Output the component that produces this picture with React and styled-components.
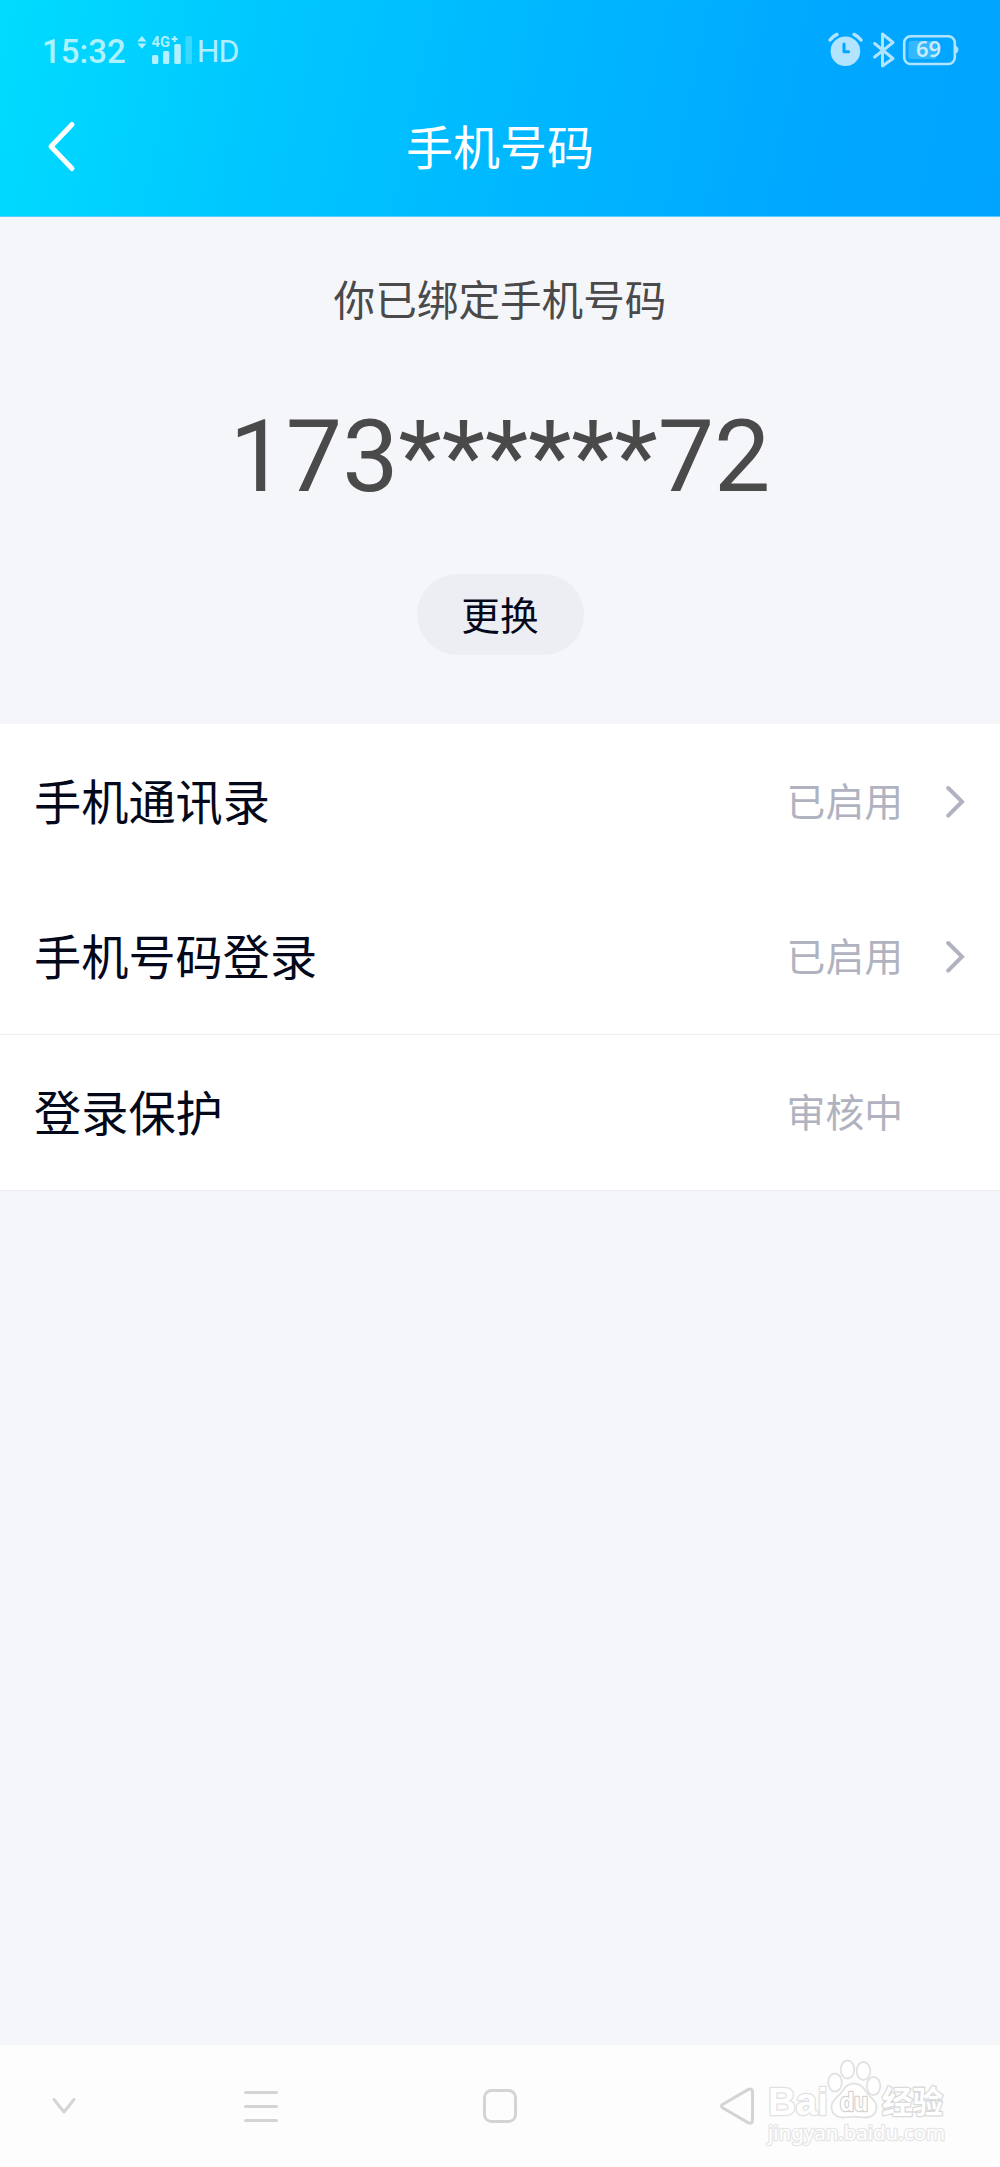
import React from 'react';
import styled, { createGlobalStyle } from 'styled-components';

const GlobalStyle = createGlobalStyle`
  * {
    box-sizing: border-box;
  }
  body {
    margin: 0;
    background: #f4f6fa;
    font-family: Roboto, 'Noto Sans CJK SC', sans-serif;
  }
`;

const Screen = styled.div`
  display: flex;
  flex-direction: column;
  width: 1000px;
  height: 2167px;
  background: #f4f6fa;
`;

const Header = styled.header`
  height: 217px;
  flex: none;
  border-bottom: 1px solid #5ccbff;
  background: linear-gradient(102deg, #00dcff 0%, #00c6ff 28%, #00b5ff 57%, #00a7ff 82%, #00a4ff 100%);
`;

const StatusBar = styled.div`
  display: flex;
  justify-content: space-between;
  height: 78px;
  padding: 0 40px 0 42px;
`;

const StatusGroup = styled.div`
  display: flex;
  align-items: flex-start;
`;

const StatusText = styled.span`
  margin: ${props => props.$margin || '0'};
  color: rgba(255, 255, 255, 0.7);
  font-size: ${props => props.$size}px;
  font-weight: ${props => props.$weight || 400};
  line-height: 40px;
  letter-spacing: ${props => props.$spacing || 0}px;
  white-space: nowrap;
`;

const StatusIcon = styled.svg`
  flex: none;
  display: block;
`;

const TitleBar = styled.div`
  display: grid;
  grid-template-columns: 120px 1fr 120px;
  align-items: center;
  height: 138px;
`;

const BackButton = styled.button`
  width: 120px;
  height: 138px;
  padding: 0;
  border: 0;
  background: none;
`;

const Title = styled.h1`
  margin: 4px 0 0;
  color: #fff;
  font-size: 47px;
  font-weight: 400;
  line-height: 60px;
  text-align: center;
`;

const Summary = styled.section`
  display: flex;
  flex-direction: column;
  align-items: center;
  height: 507px;
  flex: none;
  padding-top: 55px;
`;

const Caption = styled.div`
  color: #4a4a4a;
  font-size: 41.6px;
  line-height: 60px;
`;

const PhoneNumber = styled.div`
  margin-top: 65px;
  color: #4a4a4a;
  font-size: 100.3px;
  line-height: 120px;
`;

const ChangeButton = styled.button`
  width: 167px;
  height: 81px;
  margin-top: 57px;
  padding: 0 0 3px;
  border: 0;
  border-radius: 41px;
  background: #edeef3;
  color: #03081a;
  font-family: inherit;
  font-size: 38.7px;
`;

const List = styled.div`
  flex: none;
  background: #fff;
  border-bottom: 1px solid #ebeef5;
`;

const Row = styled.div`
  display: flex;
  align-items: center;
  height: ${props => (props.$divided ? 156 : 155)}px;
  padding: 0 34px;
  border-top: ${props => (props.$divided ? '1px solid #ebeff5' : '0')};
`;

const Label = styled.span`
  flex: 1;
  padding-top: 5px;
  color: #03081a;
  font-size: 47.2px;
  line-height: 70px;
`;

const Value = styled.span`
  padding-top: 3px;
  color: #b0b3bf;
  font-size: 38.8px;
  line-height: 60px;
`;

const ArrowSlot = styled.span`
  display: flex;
  justify-content: flex-end;
  width: 63px;
`;

const NavBar = styled.nav`
  display: flex;
  align-items: flex-start;
  height: 122px;
  flex: none;
  margin-top: auto;
  background: #fdfdfd;
`;

const NavIcon = styled.svg`
  flex: none;
  width: ${props => props.$width}px;
  height: 122px;
  fill: none;
  stroke: #d4d4d4;
  stroke-width: 3;
  stroke-linecap: round;
  stroke-linejoin: round;
`;

const Watermark = styled.svg`
  flex: none;
  width: 200px;
  height: 122px;
  fill: #fff;
  stroke: #e2e2e2;

  text {
    paint-order: stroke;
    stroke-width: 2.6px;
    stroke-linejoin: round;
  }
`;

const rows = [
  { label: '手机通讯录', value: '已启用', arrow: true },
  { label: '手机号码登录', value: '已启用', arrow: true },
  { label: '登录保护', value: '审核中', divided: true },
];

const Signal = () => (
  <StatusIcon width="66" height="78" viewBox="131 0 66 78" fill="#fff" fillOpacity="0.7">
    <path d="M137.3 41.5 141.9 36l4.6 5.5zM137.3 43.5h9.2l-4.6 5.3z" />
    <text x="151.5" y="47" fontSize="15" fontWeight="700" textLength="18.5" lengthAdjust="spacingAndGlyphs">4G</text>
    <path d="M174.6 36v6M171.6 39h6" stroke="#fff" strokeOpacity="0.7" strokeWidth="2" />
    <rect x="152" y="55" width="6.3" height="9" rx="1.6" />
    <rect x="163" y="51" width="6.3" height="13" rx="1.6" />
    <rect x="174.3" y="44" width="6.5" height="20" rx="1.6" />
    <rect x="185.3" y="36" width="6.7" height="28" rx="1.6" fillOpacity="0.22" />
  </StatusIcon>
);

const StatusIcons = () => (
  <StatusIcon width="140" height="78" viewBox="820 0 140 78" fill="none" stroke="#b3e4ff">
    <circle cx="845.4" cy="51.3" r="14.8" fill="#b3e4ff" stroke="none" />
    <path d="M844 44v7.8h4.6" stroke="#00a6ff" strokeWidth="3" strokeLinecap="round" strokeLinejoin="round" />
    <path d="M830 40q2.5-3.5 7-5.6M861 40q-2.5-3.5-7-5.6" strokeWidth="3.4" strokeLinecap="round" />
    <path d="M874.6 43.5 893 58.5l-10.5 7.5V34L893 42.5 874.6 57" strokeWidth="3" strokeLinecap="round" strokeLinejoin="round" />
    <rect x="904.2" y="36.2" width="50.6" height="27.8" rx="6.5" strokeWidth="2.6" />
    <path d="M956 46.5q2 .5 2 3.2t-2 3.3z" fill="#b3e4ff" strokeWidth="1" />
    <rect x="908.5" y="41" width="28" height="18" rx="2.5" fill="#fff" fillOpacity="0.2" stroke="none" />
    <text x="928.5" y="57.3" fill="#c8ecff" stroke="none" fontFamily="Noto Sans" fontSize="22" fontWeight="600" textAnchor="middle">69</text>
  </StatusIcon>
);

const Chevron = () => (
  <svg width="20" height="34" viewBox="0 0 20 34" fill="none" stroke="#b0b3bf" strokeWidth="4" strokeLinecap="round">
    <path d="M2.2 3 16 16.7 2.2 30.6" />
  </svg>
);

const App = () => (
  <>
    <GlobalStyle />
    <Screen>
      <Header>
        <StatusBar>
          <StatusGroup>
            <StatusText $size={33} $weight={500} $margin="32px 5px 0 0">15:32</StatusText>
            <Signal />
            <StatusText $size={32} $margin="31px 0 0 0" $spacing={-1}>HD</StatusText>
          </StatusGroup>
          <StatusGroup>
            <StatusIcons />
          </StatusGroup>
        </StatusBar>
        <TitleBar>
          <BackButton aria-label="返回">
            <svg width="120" height="138" fill="none" stroke="#fff" strokeWidth="5" strokeLinecap="round" strokeLinejoin="round">
              <path d="M72 46.5 51 68.5 72 90.5" />
            </svg>
          </BackButton>
          <Title>手机号码</Title>
        </TitleBar>
      </Header>
      <Summary>
        <Caption>你已绑定手机号码</Caption>
        <PhoneNumber>173******72</PhoneNumber>
        <ChangeButton>更换</ChangeButton>
      </Summary>
      <List>
        {rows.map(item => (
          <Row key={item.label} $divided={item.divided}>
            <Label>{item.label}</Label>
            <Value>{item.value}</Value>
            <ArrowSlot>{item.arrow && <Chevron />}</ArrowSlot>
          </Row>
        ))}
      </List>
      <NavBar>
        <NavIcon $width={200} viewBox="0 0 200 122">
          <path d="M54 54.5 64 67 74 54.5" />
        </NavIcon>
        <NavIcon $width={200} viewBox="200 0 200 122">
          <path d="M245.5 47.5h31M245.5 61.5h31M245.5 75.5h31" />
        </NavIcon>
        <NavIcon $width={200} viewBox="400 0 200 122">
          <rect x="484.5" y="45.5" width="31" height="31" rx="7" />
        </NavIcon>
        <NavIcon $width={160} viewBox="600 0 160 122">
          <path d="M722.5 59.5 748 44.6q4.5-2 4.5 2.5v28q0 4.5-4.5 2.5L722.5 62.7q-2-1.6 0-3.2z" />
        </NavIcon>
        <Watermark viewBox="760 2045 200 122">
          <text x="768" y="2115" fontFamily="Liberation Sans" fontWeight="700" fontSize="38" textLength="60" lengthAdjust="spacingAndGlyphs">Bai</text>
          <g strokeWidth="1.8">
            <ellipse cx="835" cy="2082.5" rx="6.8" ry="9" />
            <ellipse cx="847.5" cy="2069.5" rx="6.8" ry="9" />
            <ellipse cx="863.5" cy="2071" rx="6.8" ry="9" />
            <ellipse cx="873.5" cy="2086" rx="6.8" ry="9" />
            <path d="M854 2083.5c7 0 10 5 13 9.5s9.500 7 9.500 14-5 10.500-11 10.500c-5 0-7-.8-11.500-.8s-6.500.8-11.500.8c-6 0-11-4-11-10.500 0-7 6-9.500 9.500-14s6-9.500 13-9.500z" />
          </g>
          <text x="840" y="2111" fontFamily="Liberation Sans" fontWeight="700" fontSize="25" textLength="28" lengthAdjust="spacingAndGlyphs" stroke="#d2d2d2">du</text>
          <text x="882" y="2113" fontFamily="Noto Sans CJK SC" fontWeight="700" fontSize="30.5" textLength="61" stroke="#dadada">经验</text>
          <text x="768" y="2139.5" fontFamily="Noto Sans" fontSize="20.5" textLength="177" lengthAdjust="spacingAndGlyphs" stroke="#e6e6e6">jingyan.baidu.com</text>
        </Watermark>
      </NavBar>
    </Screen>
  </>
);

export default App;
